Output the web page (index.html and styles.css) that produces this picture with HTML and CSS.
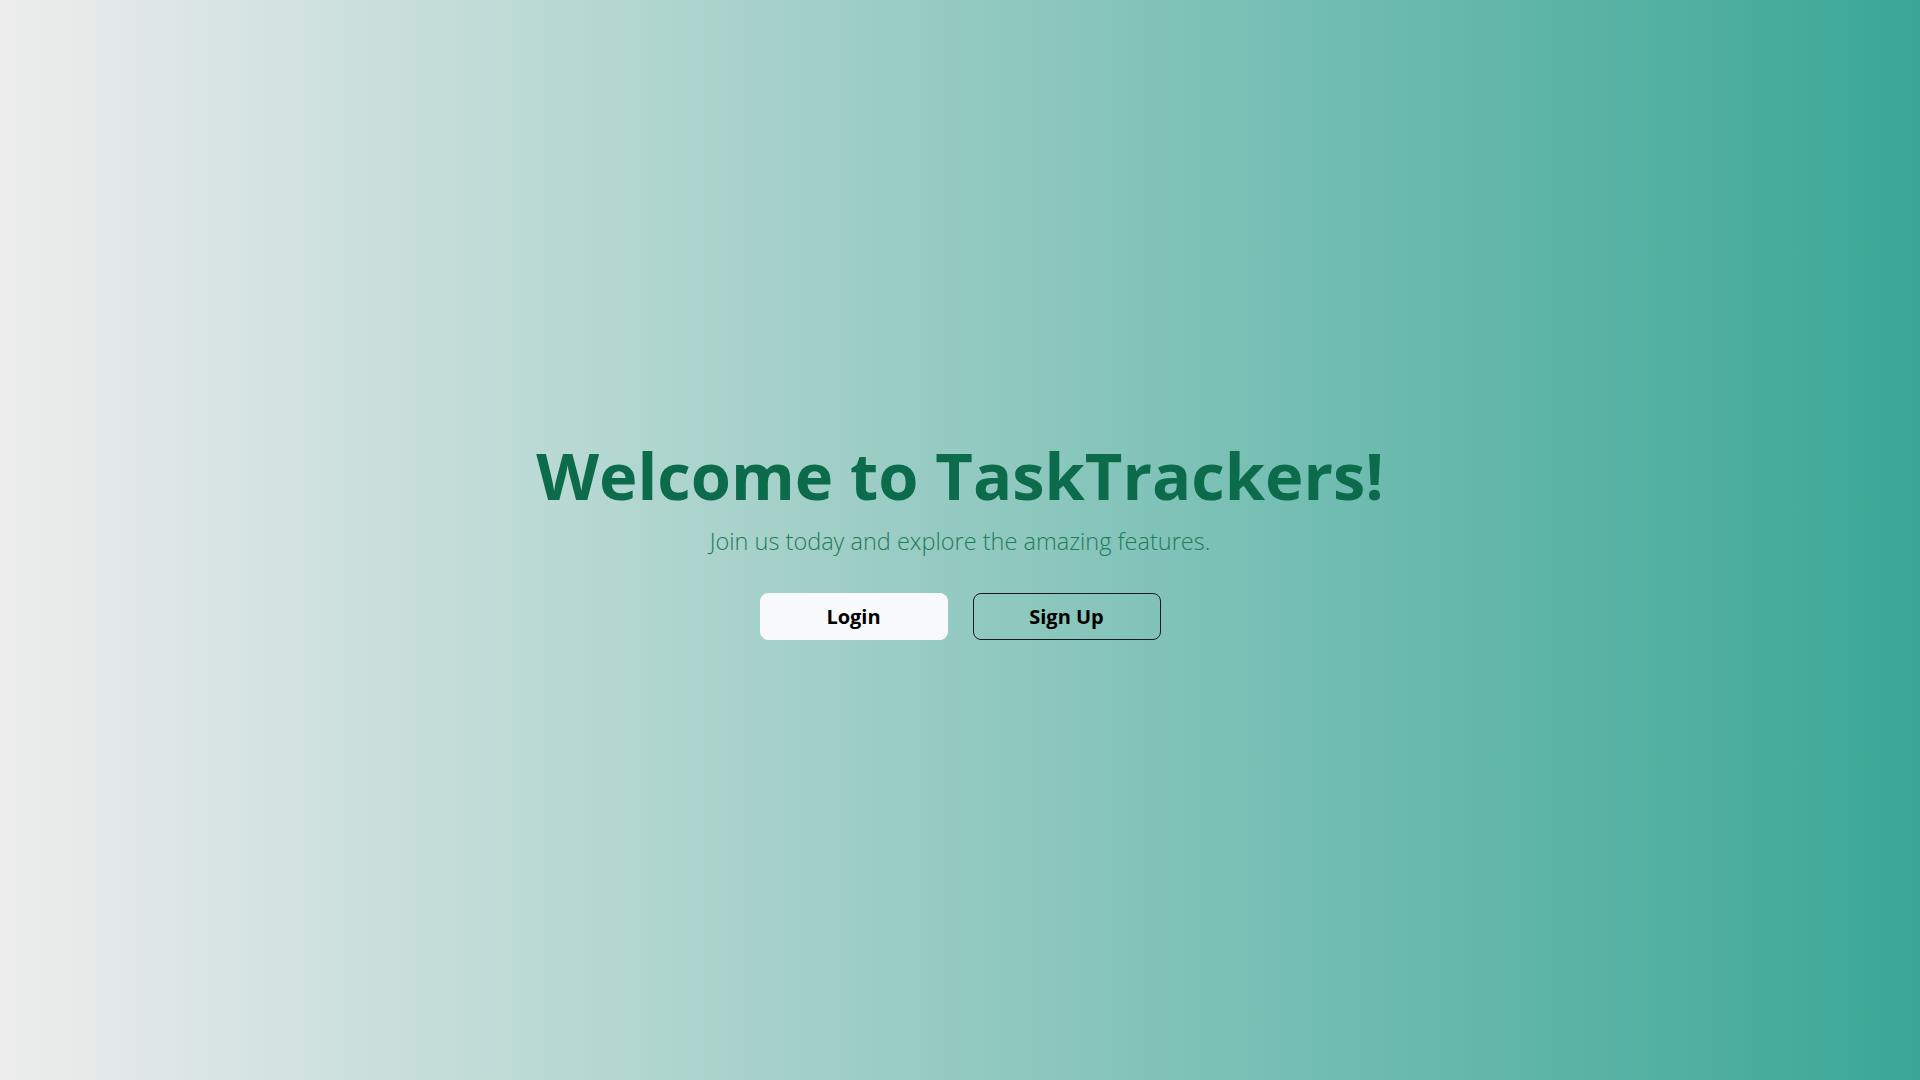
FILE: index.html
```html
<!DOCTYPE html>
<html lang="en">
<head>
<meta charset="utf-8">
<title>TaskTrackers</title>
<link rel="stylesheet" href="styles.css">
</head>
<body>
<main class="hero">
  <h1 class="hero-title">Welcome to TaskTrackers!</h1>
  <p class="hero-sub">Join us today and explore the amazing features.</p>
  <div class="hero-actions">
    <a class="btn btn-light" href="#">Login</a>
    <a class="btn btn-outline" href="#">Sign Up</a>
  </div>
</main>
</body>
</html>
```

FILE: styles.css
```css
* { box-sizing: border-box; }
html, body { margin: 0; padding: 0; height: 100%; }
body {
  font-family: "Open Sans", "Noto Sans", sans-serif;
  background: linear-gradient(to right, #ededed 0%, #3aa796 100%);
  color: #000;
}
.hero {
  min-height: 100vh;
  padding-bottom: 5px;
  display: flex;
  flex-direction: column;
  align-items: center;
  justify-content: center;
  text-align: center;
}
.hero-title {
  margin: 0;
  font-size: 65px;
  font-weight: 700;
  line-height: 78px;
  color: #0b6b4a;
}
.hero-sub {
  margin: 10px 0 0;
  font-size: 23.5px;
  font-weight: 300;
  line-height: 35px;
  color: #1f7c58;
}
.hero-actions {
  margin-top: 34px;
  display: flex;
  gap: 25px;
}
.btn {
  display: inline-flex;
  align-items: center;
  justify-content: center;
  width: 188px;
  height: 47px;
  border-radius: 8px;
  font-size: 20px;
  font-weight: 700;
  color: #000;
  text-decoration: none;
  border: 1px solid transparent;
}
.btn-light { background: #f8f9fa; border-color: #f8f9fa; }
.btn-outline { background: transparent; border-color: #1a1a1a; }
```
